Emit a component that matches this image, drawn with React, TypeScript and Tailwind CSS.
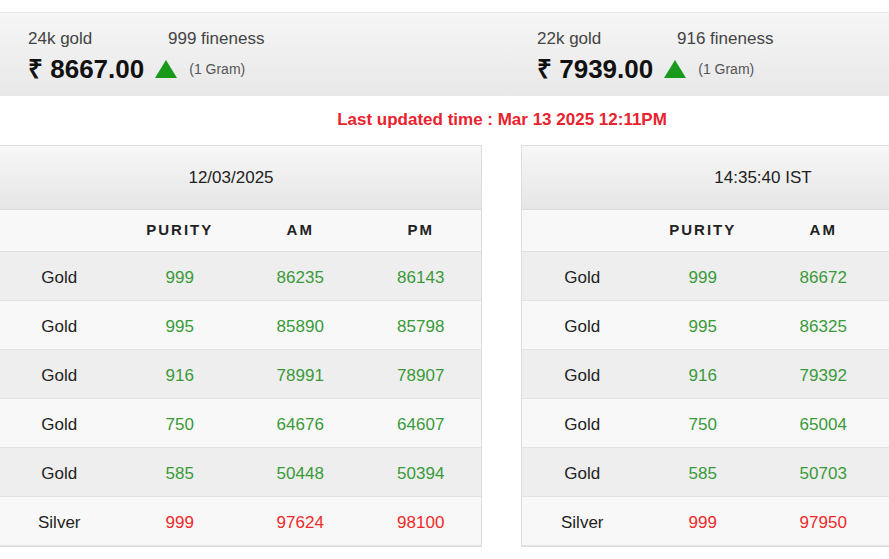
import React from "react";

const rows = [
  ["Gold", "999", "86235", "86143", "86672"],
  ["Gold", "995", "85890", "85798", "86325"],
  ["Gold", "916", "78991", "78907", "79392"],
  ["Gold", "750", "64676", "64607", "65004"],
  ["Gold", "585", "50448", "50394", "50703"],
  ["Silver", "999", "97624", "98100", "97950"],
];

function Table({ title, right }: { title: string; right?: boolean }) {
  return (
    <div className="w-[484px] shrink-0 border border-[#dddddd] bg-white">
      <div className="h-[64px] flex items-center justify-center text-[17px] text-[#222] bg-gradient-to-b from-[#f7f7f7] to-[#e6e6e6] border-b border-[#dcdcdc]">
        <span className={right ? "" : "mr-[18px]"}>{title}</span>
      </div>
      <div className="grid grid-cols-4 h-[42px] items-center bg-[#f8f8f8] border-b border-[#e0e0e0] text-[15px] font-bold tracking-[2px] text-[#222] text-center">
        <span></span><span>PURITY</span><span>AM</span><span>{right ? "" : "PM"}</span>
      </div>
      {rows.map((r, i) => {
        const silver = r[0] === "Silver";
        const c = silver ? "text-[#ee2a2a]" : "text-[#3a9a3a]";
        return (
          <div key={i} className={`grid grid-cols-4 h-[49px] items-center text-center text-[17px] pt-[3px] border-b border-[#e3e3e3] ${i % 2 === 0 ? "bg-[#eeeeee]" : "bg-[#f8f8f8]"}`}>
            <span className="text-[#222]">{r[0]}</span>
            <span className={c}>{r[1]}</span>
            <span className={c}>{right ? r[4] : r[2]}</span>
            <span className={c}>{right ? "" : r[3]}</span>
          </div>
        );
      })}
    </div>
  );
}

function Price({ k, f, p }: { k: string; f: string; p: string }) {
  return (
    <div className="w-[509px] shrink-0 pl-[28px] pt-[13px]">
      <div className="flex text-[17px] text-[#444]">
        <span className="w-[140px]">{k}</span>
        <span>{f}</span>
      </div>
      <div className="flex items-center mt-[-2px]">
        <span className="text-[26px] font-bold text-[#111]">₹ {p}</span>
        <svg width="22" height="18" viewBox="0 0 22 18" className="ml-[11px]"><polygon points="11,0 22,18 0,18" fill="#1a9a1a" /></svg>
        <span className="ml-[12px] text-[14px] text-[#555]">(1 Gram)</span>
      </div>
    </div>
  );
}

export default function App() {
  return (
    <div className="w-[889px] h-[559px] overflow-hidden bg-white" style={{ fontFamily: '"Liberation Sans", Arial, sans-serif' }}>
      <div className="h-[12px]" />
      <div className="h-[84px] flex overflow-hidden bg-gradient-to-b from-[#f6f6f6] to-[#e8e8e8] border-t border-[#e6e6e6]">
        <Price k="24k gold" f="999 fineness" p="8667.00" />
        <Price k="22k gold" f="916 fineness" p="7939.00" />
      </div>
      <div className="h-[48px] flex items-center justify-center pl-[115px] text-[17px] font-bold text-[#e8232e]">
        Last updated time : Mar 13 2025 12:11PM
      </div>
      <div className="flex ml-[-2px] gap-[39px] mt-[1px]">
        <Table title="12/03/2025" />
        <Table title="14:35:40 IST" right />
      </div>
    </div>
  );
}
